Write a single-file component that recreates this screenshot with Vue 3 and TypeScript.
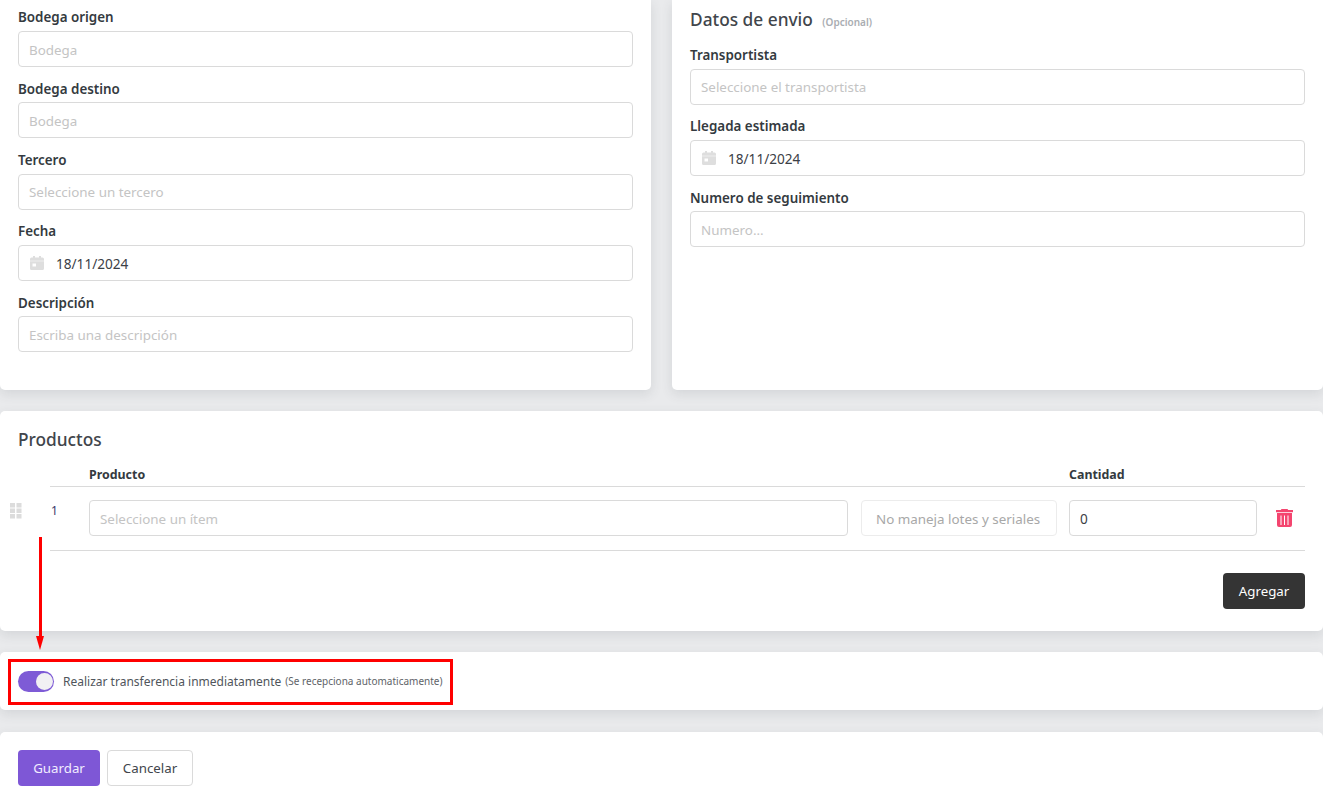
<script setup lang="ts">
interface Field { label: string; placeholder?: string; date?: string }
const left: Field[] = [
  { label: 'Bodega origen', placeholder: 'Bodega' },
  { label: 'Bodega destino', placeholder: 'Bodega' },
  { label: 'Tercero', placeholder: 'Seleccione un tercero' },
  { label: 'Fecha', date: '18/11/2024' },
  { label: 'Descripción', placeholder: 'Escriba una descripción' },
]
const right: Field[] = [
  { label: 'Transportista', placeholder: 'Seleccione el transportista' },
  { label: 'Llegada estimada', date: '18/11/2024' },
  { label: 'Numero de seguimiento', placeholder: 'Numero...' },
]
</script>

<template>
  <div class="page">
    <div class="top-row">
      <section class="card form-card left-card">
        <div v-for="f in left" :key="f.label" class="field">
          <div class="label">{{ f.label }}</div>
          <div class="input">
            <template v-if="f.date">
              <svg class="cal" viewBox="0 0 14 14" width="14" height="14"><path fill="#dedede" d="M3 0h2v1.500h4V0h2v1.500h1.500A1.500 1.500 0 0 1 14 3v1.800H0V3a1.500 1.500 0 0 1 1.500-1.500H3zM0 5.300h14v7.200a1.500 1.500 0 0 1-1.500 1.500h-11A1.500 1.500 0 0 1 0 12.500zM2.500 7.500v3h3.500v-3z"/></svg>
              <span class="value">{{ f.date }}</span>
            </template>
            <span v-else class="ph">{{ f.placeholder }}</span>
          </div>
        </div>
      </section>
      <section class="card form-card right-card">
        <h2 class="title">Datos de envio <small class="opt">(Opcional)</small></h2>
        <div v-for="f in right" :key="f.label" class="field">
          <div class="label">{{ f.label }}</div>
          <div class="input">
            <template v-if="f.date">
              <svg class="cal" viewBox="0 0 14 14" width="14" height="14"><path fill="#dedede" d="M3 0h2v1.500h4V0h2v1.500h1.500A1.500 1.500 0 0 1 14 3v1.800H0V3a1.500 1.500 0 0 1 1.500-1.500H3zM0 5.300h14v7.200a1.500 1.500 0 0 1-1.500 1.500h-11A1.500 1.500 0 0 1 0 12.500zM2.500 7.500v3h3.500v-3z"/></svg>
              <span class="value">{{ f.date }}</span>
            </template>
            <span v-else class="ph">{{ f.placeholder }}</span>
          </div>
        </div>
      </section>
    </div>

    <section class="card products">
      <h2 class="title">Productos</h2>
      <div class="table">
        <div class="thead">
          <span class="th-prod">Producto</span>
          <span class="th-qty">Cantidad</span>
        </div>
        <div class="trow">
          <svg class="drag" viewBox="0 0 12 16" width="12" height="16"><g fill="#dcdcdc"><rect x="0" y="0" width="5" height="4.500"/><rect x="6.500" y="0" width="5" height="4.500"/><rect x="0" y="5.500" width="5" height="4.500"/><rect x="6.500" y="5.500" width="5" height="4.500"/><rect x="0" y="11" width="5" height="4.500"/><rect x="6.500" y="11" width="5" height="4.500"/></g></svg>
          <span class="num">1</span>
          <div class="input item"><span class="ph">Seleccione un ítem</span></div>
          <div class="input lots"><span class="lots-text">No maneja lotes y seriales</span></div>
          <div class="input qty"><span class="value">0</span></div>
          <svg class="trash" viewBox="0 0 17 18" width="17" height="18"><path fill="#f4456f" d="M5.500 0h6l.7 1H17v2.200H0V1h4.800zM1 4h15v12a2 2 0 0 1-2 2H3a2 2 0 0 1-2-2zM4.500 6.500V16h1V6.500zm3.500 0V16h1V6.500zm3.500 0V16h1V6.500z"/></svg>
        </div>
      </div>
      <div class="add-wrap"><button class="btn dark">Agregar</button></div>
    </section>

    <section class="card toggle-card">
      <span class="switch"><span class="knob"></span></span>
      <span class="toggle-text">Realizar transferencia inmediatamente</span>
      <small class="toggle-note">(Se recepciona automaticamente)</small>
    </section>

    <section class="card actions">
      <button class="btn primary">Guardar</button>
      <button class="btn outline">Cancelar</button>
    </section>

    <!-- annotation overlay -->
    <div class="anno-box"></div>
    <div class="anno-line"></div>
    <div class="anno-head"></div>
  </div>
</template>

<style>
html, body { margin: 0; background: #e9eaec; }
</style>

<style scoped>
.page {
  position: relative;
  height: 802px;
  overflow: hidden;
  background: #e9eaec;
  font-family: "Noto Sans", "Open Sans", sans-serif;
  font-size: 14px;
  color: #343a40;
}
.card {
  background: #fff;
  border-radius: 5px;
  box-shadow: 0 4px 12px rgba(60, 65, 75, 0.12);
}
.top-row {
  display: grid;
  grid-template-columns: 651px 651px;
  gap: 21px;
  height: 390px;
}
.form-card { border-radius: 0 0 5px 5px; padding: 0 18px; }
.left-card { padding-top: 7.400px; }
.right-card { padding-top: 8px; }
.title {
  margin: 0;
  font-size: 17.300px;
  line-height: 24px;
  font-weight: 500;
  color: #41454b;
}
.right-card .title { margin-bottom: 13px; }
.opt { font-size: 10px; line-height: 1; font-weight: 600; color: #a9adb2; margin-left: 5px; }
.field { margin-bottom: 11.600px; }
.label {
  font-size: 13.400px;
  line-height: 21px;
  font-weight: 600;
  color: #343a40;
  margin-bottom: 2.700px;
}
.input {
  box-sizing: border-box;
  height: 36px;
  display: flex;
  align-items: center;
  border: 1px solid #dadada;
  border-radius: 4px;
  padding: 1px 10px 0;
  background: #fff;
}
.ph { font-size: 13.400px; color: #c4c4c4; }
.value { font-size: 13.600px; color: #3b4046; }
.cal { margin-right: 12px; flex: none; margin-left: 1px; margin-top: -1px; }

.products {
  margin-top: 21px;
  height: 220px;
  padding: 17px 18px 0;
  box-sizing: border-box;
  position: relative;
}
.table { margin-top: 12px; margin-left: 32px; }
.thead {
  box-sizing: border-box;
  display: flex;
  height: 23px;
  border-bottom: 1px solid #dadada;
  font-size: 12.400px;
  font-weight: 700;
  line-height: 21px;
  color: #343a40;
}
.th-prod { margin-left: 39px; width: 980px; }
.trow {
  height: 62px;
  padding-bottom: 1px;
  border-bottom: 1px solid #dadada;
  display: flex;
  align-items: center;
  position: relative;
}
.drag { position: absolute; left: -40px; top: 16px; }
.num { width: 39px; padding-left: 1px; box-sizing: border-box; font-size: 12px; color: #3a3a6a; align-self: flex-start; margin-top: 15px; line-height: 18px; }
.item { width: 759px; margin-right: 13px; }
.lots { width: 196px; margin-right: 12px; border-color: #ececec; padding: 1px 14px 0; }
.lots-text { font-size: 13.400px; color: #a8a8a8; white-space: nowrap; }
.qty { width: 188px; margin-right: 19px; }
.trash { flex: none; }
.add-wrap { display: flex; justify-content: flex-end; margin-top: 22px; }
.btn {
  box-sizing: border-box;
  height: 36px;
  border-radius: 4px;
  border: 1px solid transparent;
  font-family: inherit;
  font-size: 13.300px;
  padding: 0;
}
.dark { width: 82px; background: #343434; color: #fff; }
.toggle-card {
  margin-top: 21px;
  height: 58px;
  display: flex;
  align-items: center;
  padding: 0 18px;
}
.switch {
  width: 36px;
  height: 21px;
  border-radius: 11px;
  background: #7e5bd6;
  position: relative;
  margin-right: 9px;
  flex: none;
}
.knob {
  position: absolute;
  right: 1px;
  top: 2px;
  width: 17px;
  height: 17px;
  border-radius: 50%;
  background: #f1f0f3;
}
.toggle-text { font-size: 12px; color: #50555b; white-space: nowrap; }
.toggle-note { font-size: 10px; color: #5e6368; margin-left: 4px; white-space: nowrap; }
.actions {
  margin-top: 22px;
  height: 90px;
  padding: 18px 18px 0;
  box-sizing: border-box;
  display: flex;
  align-items: flex-start;
  gap: 7px;
}
.primary { width: 82px; background: #7e57d6; color: #f1ecff; }
.outline { width: 86px; background: #fff; border-color: #dadada; color: #41454b; }
.anno-box {
  position: absolute;
  left: 8px;
  top: 659px;
  width: 445px;
  height: 46px;
  box-sizing: border-box;
  border: 3px solid #f00;
}
.anno-line {
  position: absolute;
  left: 39px;
  top: 537px;
  width: 3px;
  height: 100px;
  background: #f00;
}
.anno-head {
  position: absolute;
  left: 36px;
  top: 636px;
  border-left: 4.500px solid transparent;
  border-right: 4.500px solid transparent;
  border-top: 14px solid #f00;
}
</style>
